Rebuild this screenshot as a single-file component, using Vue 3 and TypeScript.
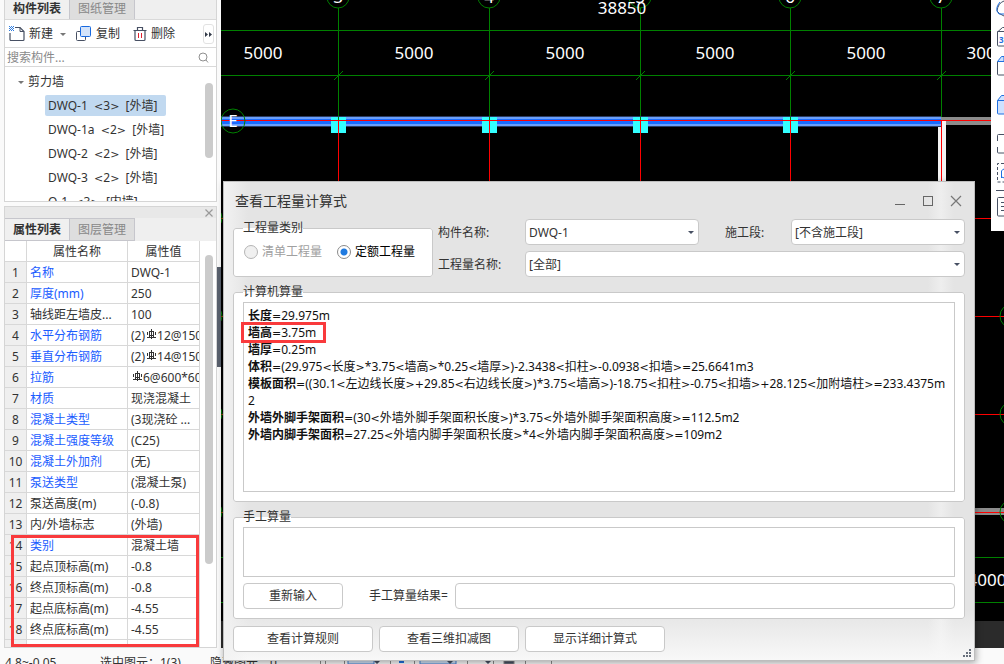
<script setup lang="ts">
import { ref } from 'vue'

interface TreeItem {
  label: string
  selected?: boolean
}

interface Property {
  name: string
  value: string
  link?: boolean
  prefix?: string
  rebar?: boolean
}

interface FormulaLine {
  label: string
  text: string
}

interface TextRun {
  text: string
  operator: boolean
}

const treeItems: TreeItem[] = [
  { label: 'DWQ-1  <3>  [外墙]', selected: true },
  { label: 'DWQ-1a  <2>  [外墙]' },
  { label: 'DWQ-2  <2>  [外墙]' },
  { label: 'DWQ-3  <2>  [外墙]' },
  { label: 'Q-1  <3>  [内墙]' },
]

const properties: Property[] = [
  { name: '名称', value: 'DWQ-1', link: true },
  { name: '厚度(mm)', value: '250', link: true },
  { name: '轴线距左墙皮...', value: '100' },
  { name: '水平分布钢筋', prefix: '(2)', rebar: true, value: '12@150', link: true },
  { name: '垂直分布钢筋', prefix: '(2)', rebar: true, value: '14@150', link: true },
  { name: '拉筋', prefix: '', rebar: true, value: '6@600*600', link: true },
  { name: '材质', value: '现浇混凝土', link: true },
  { name: '混凝土类型', value: '(3现浇砼 ...', link: true },
  { name: '混凝土强度等级', value: '(C25)', link: true },
  { name: '混凝土外加剂', value: '(无)', link: true },
  { name: '泵送类型', value: '(混凝土泵)', link: true },
  { name: '泵送高度(m)', value: '(-0.8)' },
  { name: '内/外墙标志', value: '(外墙)' },
  { name: '类别', value: '混凝土墙', link: true },
  { name: '起点顶标高(m)', value: '-0.8' },
  { name: '终点顶标高(m)', value: '-0.8' },
  { name: '起点底标高(m)', value: '-4.55' },
  { name: '终点底标高(m)', value: '-4.55' },
  { name: '', value: '' },
]

const formulas: FormulaLine[] = [
  { label: '长度', text: '=29.975m' },
  { label: '墙高', text: '=3.75m' },
  { label: '墙厚', text: '=0.25m' },
  { label: '体积', text: '=(29.975<长度>*3.75<墙高>*0.25<墙厚>)-2.3438<扣柱>-0.0938<扣墙>=25.6641m3' },
  {
    label: '模板面积',
    text: '=((30.1<左边线长度>+29.85<右边线长度>)*3.75<墙高>)-18.75<扣柱>-0.75<扣墙>+28.125<加附墙柱>=233.4375m2',
  },
  { label: '外墙外脚手架面积', text: '=(30<外墙外脚手架面积长度>)*3.75<外墙外脚手架面积高度>=112.5m2' },
  { label: '外墙内脚手架面积', text: '=27.25<外墙内脚手架面积长度>*4<外墙内脚手架面积高度>=109m2' },
]

// Splits a string so that math signs can be set in their own, wider face.
function runs(text: string): TextRun[] {
  return text
    .split(/([<>=+])/)
    .filter((part) => part.length > 0)
    .map((part) => ({ text: part, operator: /^[<>=+]$/.test(part) }))
}

const axes = [
  { x: 338, name: '3' },
  { x: 489, name: '4' },
  { x: 640, name: '5' },
  { x: 790, name: '6' },
  { x: 941, name: '7' },
]
const columnXs = [338, 489, 640, 790]
const spanXs = [263, 414, 565, 715, 866]
const sideAxisYs = [218, 316, 414, 512]

const component = ref('DWQ-1')
const segment = ref('[不含施工段]')
const quantity = ref('[全部]')
const category = ref('quota')
const search = ref('')
const manual = ref('')
const manualResult = ref('')
</script>

<template>
  <div class="app">
    <div class="workspace">
      <aside class="dock">
        <section class="components">
          <div class="tabs tabs-top">
            <button class="tab active">构件列表</button>
            <button class="tab">图纸管理</button>
          </div>
          <div class="toolbar">
            <button class="tool new">
              <svg width="16" height="16" viewBox="0 0 16 16">
                <path d="M6 1.5h5l4 4v8a1 1 0 0 1-1 1H2a1 1 0 0 1-1-1V7" fill="none" stroke="#475063" stroke-width="1.2" />
                <path d="M11 1.5v4h4" fill="none" stroke="#475063" />
                <path d="M0 .5h5M0 2.5h5M0 4.5h5" stroke="#2f7de0" stroke-dasharray="1 1" />
                <path d="M1 1.5h4M1 3.5h4" stroke="#2f7de0" stroke-dasharray="1 1" />
              </svg>
              新建
              <i class="caret"></i>
            </button>
            <button class="tool copy">
              <svg width="16" height="16" viewBox="0 0 16 16">
                <path d="M4 5.5H1.5a1 1 0 0 0-1 1v7a1 1 0 0 0 1 1h7a1 1 0 0 0 1-1V11" fill="none" stroke="#475063" />
                <rect x="4.5" y=".5" width="10" height="10" rx="1" fill="#d3e3fa" stroke="#1769e0" />
              </svg>
              复制
            </button>
            <button class="tool">
              <svg width="14" height="16" viewBox="0 0 14 16">
                <path d="M.5 4.5h13M4.5 4V1.5h5V4M2 4.5v9a1 1 0 0 0 1 1h8a1 1 0 0 0 1-1v-9" fill="none" stroke="#475063" stroke-width="1.2" />
                <path d="M5.5 7v5M8.5 7v5" stroke="#e02030" />
              </svg>
              删除
            </button>
            <button class="more" aria-label="更多">
              <svg width="7" height="5" viewBox="0 0 7 5"><path d="M0 0l3 2.5L0 5zM4 0l3 2.5L4 5z" fill="#333a48" /></svg>
            </button>
          </div>
          <label class="search">
            <input v-model="search" type="text" placeholder="搜索构件..." />
            <svg width="11" height="11" viewBox="0 0 11 11">
              <circle cx="5" cy="5" r="4" fill="none" stroke="#909090" />
              <path d="M8 8l2 2.5" stroke="#909090" />
            </svg>
          </label>
          <div class="tree">
            <ul>
              <li class="group"><i class="caret"></i>剪力墙</li>
              <li v-for="item in treeItems" :key="item.label">
                <span class="leaf" :class="{ selected: item.selected }"><span v-for="(run, i) in runs(item.label)" :key="i" :class="{ op: run.operator }">{{ run.text }}</span></span>
              </li>
            </ul>
            <div class="track"><div class="thumb tree-thumb"></div></div>
          </div>
        </section>

        <section class="properties">
          <div class="strip">
            <button aria-label="关闭">
              <svg width="8" height="8" viewBox="0 0 8 8"><path d="M.5.5l7 7M7.500.5l-7 7" stroke="#999" stroke-width="1.2" /></svg>
            </button>
          </div>
          <div class="tabs">
            <button class="tab active">属性列表</button>
            <button class="tab">图层管理</button>
          </div>
          <div class="grid">
            <table>
              <colgroup>
                <col class="c-num" />
                <col class="c-name" />
                <col class="c-value" />
              </colgroup>
              <thead>
                <tr><th></th><th>属性名称</th><th>属性值</th></tr>
              </thead>
              <tbody>
                <tr v-for="(p, i) in properties" :key="i">
                  <th scope="row">{{ p.name ? i + 1 : '' }}</th>
                  <td :class="{ link: p.link }">{{ p.name }}</td>
                  <td>{{ p.prefix }}<svg v-if="p.rebar" class="rebar" width="11" height="10" viewBox="0 0 11 10" fill="none" stroke="#333" shape-rendering="crispEdges"><path d="M5.500 0v10M3.500 2v6M7.500 2v6M1 8.500h9" /><path d="M3 2.500h5M3 6.500h5M1.500 3v3M9.500 3v3" /></svg>{{ p.value }}</td>
                </tr>
              </tbody>
            </table>
            <div class="track"><div class="thumb grid-thumb"></div></div>
            <div class="mark mark-grid"></div>
          </div>
        </section>
        <div class="splitter"></div>
      </aside>

      <main class="canvas">
        <svg width="100%" height="100%" shape-rendering="crispEdges">
          <g transform="translate(-221 0)">
            <rect x="221" y="621" width="100%" height="27" fill="#2b2b2b" />
            <g stroke="#008000">
              <path d="M221 30.5h783M221 75.5h783M221 557.500h783M221 602.500h783" />
              <path v-for="a in axes" :key="a.x" :d="`M${a.x + 0.5} 8V120`" />
            </g>
            <path d="M221 218.500h783M221 316.500h783M221 414.500h783" stroke="#ff0000" />
            <rect x="941" y="117" width="63" height="8" fill="#8c8c8c" />
            <rect x="938" y="121" width="8" height="70" fill="#f4f4f4" />
            <rect x="974" y="508" width="30" height="7" fill="#8c8c8c" />
            <path d="M221 512.500h783" stroke="#ff0000" />
            <rect x="221" y="116" width="720" height="11" fill="#2b3d63" />
            <rect x="221" y="117" width="720" height="9" fill="#6a9ffa" />
            <rect x="221" y="119" width="720" height="5" fill="#196bff" />
            <rect v-for="x in columnXs" :key="x" :x="x - 7" y="117" width="15" height="16" fill="#33ffff" />
            <path d="M221 120.500h783" stroke="#ff0000" />
            <path v-for="a in axes" :key="a.name" :d="`M${a.x + 0.5} 121V200`" stroke="#ff0000" />
            <path v-for="x in columnXs" :key="`t${x}`" :d="`M${x + 0.5} 117V120`" stroke="#008000" />
            <g fill="none" stroke="#008000" shape-rendering="auto">
              <path v-for="a in axes" :key="a.x" :d="`M${a.x - 4} 80l9 -9`" />
              <circle v-for="a in axes" :key="a.name" :cx="a.x" cy="-3" r="11" />
              <circle cx="233" cy="121" r="12" />
              <circle v-for="y in sideAxisYs" :key="y" cx="210" :cy="y" r="12" />
              <circle v-for="y in sideAxisYs.slice(1)" :key="`r${y}`" cx="1012" :cy="y" r="12" />
            </g>
            <g class="cad-text" text-anchor="middle" shape-rendering="auto">
              <text v-for="a in axes" :key="a.x" :x="a.x" y="3">{{ a.name }}</text>
              <text x="622" y="14">38850</text>
              <text v-for="x in spanXs" :key="x" :x="x" y="59">5000</text>
              <text x="986" y="59">3000</text>
              <text x="987" y="586">4000</text>
              <text x="233" y="127">E</text>
            </g>
          </g>
        </svg>
      </main>
    </div>

    <nav class="view-tools" aria-label="视图">
      <svg width="13" height="231" viewBox="0 0 13 231" fill="none" stroke="#475063">
        <path d="M13 1Q7 3 6 11q2 3 7 5" />
        <path d="M9 2Q3 9 8 14h5" stroke="#1f6fe0" />
        <path d="M13 31.500H6.500V45a1 1 0 0 0 1 1H13M6.500 32l5-4.500H13" />
        <path d="M6.500 61.500V74a1 1 0 0 0 1 1H13" />
        <path d="M6.500 61.500l4-5H13v5z" fill="#cfe2ff" stroke="#1f6fe0" />
        <path d="M6.500 100.500l4-5H15V114H7.500a1 1 0 0 1-1-1zM6.500 100.500H13" fill="#cfe2ff" stroke="#1f6fe0" />
        <path d="M13 134.500H7.500a1 1 0 0 0-1 1V141M6.500 147v5a1 1 0 0 0 1 1H13" />
        <path d="M13 163.500H6.500V182H13" stroke-dasharray="3 2" />
        <path d="M10.500 171v7M10.500 171q1-2 3-2M10.500 177l3 1" stroke="#1f6fe0" />
        <path d="M5 190.500h8" />
        <path d="M13 197.500H7.500a1 1 0 0 0-1 1V215a1 1 0 0 0 1 1H13M10 202.500h3M10 206.500h3M10 210.500h3" />
        <text x="8" y="43" class="three">3</text>
      </svg>
    </nav>

    <footer class="status">
      <span class="elevation">4.8~-0.05</span>
      <span class="picked">选中图元：1(3)</span>
      <span class="hidden-count">隐藏图元：0</span>
      <svg width="234" height="9" viewBox="0 0 234 9" fill="none" stroke="#8a8a8a">
        <path d="M28 0h26v9H28zM100 0h36v9h-36z" fill="#cfe0f5" stroke="#3f7fd0" />
        <path d="M.5 0v9M5.500 0v9M24.500 0v9M70.500 0v9M94.500 0v9M147.500 0v9M173.500 0v9M205.500 0v9M231.500 0v9" />
        <path d="M184 6h10v3h-10z" fill="#475063" />
        <path d="M54 6h6l-3 3zM127 6h6l-3 3zM165 6h6l-3 3z" fill="#475063" stroke="none" />
        <path d="M79 7h5" stroke="#1f6fe0" stroke-width="2" />
      </svg>
    </footer>

    <section class="dialog" role="dialog" aria-labelledby="dialog-title">
      <header class="titlebar">
        <h1 id="dialog-title">查看工程量计算式</h1>
        <button aria-label="最小化"><svg width="12" height="12" viewBox="0 0 12 12"><path d="M1 9.500h10" stroke="#666" /></svg></button>
        <button aria-label="最大化"><svg width="12" height="12" viewBox="0 0 12 12"><rect x="1.500" y="1.500" width="9" height="9" fill="none" stroke="#666" /></svg></button>
        <button aria-label="关闭"><svg width="12" height="12" viewBox="0 0 12 12"><path d="M1 1l10 10M11 1L1 11" stroke="#777" stroke-width="1.200" /></svg></button>
      </header>

      <form class="body" @submit.prevent>
        <div class="filters">
          <fieldset class="category">
            <legend>工程量类别</legend>
            <label class="radio disabled"><input v-model="category" type="radio" name="category" value="list" disabled />清单工程量</label>
            <label class="radio"><input v-model="category" type="radio" name="category" value="quota" />定额工程量</label>
          </fieldset>
          <div class="fields">
            <label for="component">构件名称:</label>
            <div class="combo">
              <select id="component" v-model="component"><option>DWQ-1</option></select>
            </div>
            <label for="segment" class="second">施工段:</label>
            <div class="combo">
              <select id="segment" v-model="segment"><option>[不含施工段]</option></select>
            </div>
            <label for="quantity">工程量名称:</label>
            <div class="combo wide">
              <select id="quantity" v-model="quantity"><option>[全部]</option></select>
            </div>
          </div>
        </div>

        <fieldset class="group-box computed">
          <legend>计算机算量</legend>
          <div class="result">
            <p v-for="line in formulas" :key="line.label"><b>{{ line.label }}</b><span v-for="(run, i) in runs(line.text)" :key="i" :class="{ op: run.operator }">{{ run.text }}</span></p>
            <div class="mark mark-result"></div>
          </div>
        </fieldset>

        <fieldset class="group-box manual">
          <legend>手工算量</legend>
          <textarea v-model="manual" aria-label="手工算量"></textarea>
          <div class="manual-row">
            <button type="button" class="btn reset">重新输入</button>
            <label for="manual-result">手工算量结果=</label>
            <input id="manual-result" v-model="manualResult" type="text" />
          </div>
        </fieldset>

        <div class="actions">
          <button type="button" class="btn">查看计算规则</button>
          <button type="button" class="btn">查看三维扣减图</button>
          <button type="button" class="btn">显示详细计算式</button>
        </div>
      </form>
      <svg class="grip" width="8" height="8" viewBox="0 0 8 8" fill="#68707c">
        <path d="M6 0h2v2H6zM3 3h2v2H3zM6 3h2v2H6zM0 6h2v2H0zM3 6h2v2H3zM6 6h2v2H6z" />
      </svg>
    </section>
  </div>
</template>

<style>
body {
  margin: 0;
  overflow: hidden;
}
</style>

<style scoped>
.app,
.app * {
  box-sizing: border-box;
}
.app {
  position: relative;
  display: flex;
  flex-direction: column;
  height: 100vh;
  overflow: hidden;
  background: #fafafa;
  color: #333;
  font: 12px/16px "Noto Sans", "Noto Sans CJK SC", sans-serif;
}
button,
input,
select,
textarea {
  margin: 0;
  padding: 0;
  border: 0;
  background: none;
  color: inherit;
  font: inherit;
}
svg {
  display: block;
  flex: none;
}
.op {
  font-family: "DejaVu Sans", sans-serif;
  font-size: 11px;
  line-height: 1;
}
.workspace {
  flex: 1;
  display: flex;
  min-height: 0;
}
.dock {
  position: relative;
  flex: none;
  display: flex;
  flex-direction: column;
  gap: 4px;
  width: 221px;
  padding: 0 4px;
  background: #fafafa;
}
.splitter {
  position: absolute;
  right: 0;
  top: 267px;
  width: 4px;
  height: 100px;
  background: #59606d;
}
.components,
.properties {
  border: 1px solid #d5d5d5;
}
.components {
  border-top: 0;
  background: #fff;
}
.properties {
  flex: 1;
  display: flex;
  flex-direction: column;
  min-height: 0;
  background: #fff;
}
.tabs {
  display: flex;
  height: 23px;
  background: #efefef;
}
.tab {
  width: 65px;
  border: 1px solid #c6c6cc;
  border-left: 0;
  background: #dedede;
  color: #888;
}
.tab.active {
  background: #f0f0f0;
  color: #333;
  font-weight: bold;
}
.tabs-top {
  height: 20px;
  border-bottom: 1px solid #d9d9d9;
}
.tabs-top .tab {
  border-top: 0;
  border-bottom: 0;
  padding-bottom: 1px;
}
.toolbar {
  display: flex;
  align-items: center;
  height: 28px;
  padding: 1px 2px 0 4px;
  border-bottom: 1px solid #d9d9d9;
}
.tool {
  display: flex;
  align-items: center;
  gap: 4px;
  white-space: nowrap;
}
.new {
  margin-right: 10px;
}
.copy {
  margin-right: 13px;
}
.caret {
  width: 0;
  border: 3px solid transparent;
  border-top-color: #777;
  border-bottom: 0;
}
.new .caret {
  margin-left: 3px;
}
.more {
  display: flex;
  align-items: center;
  justify-content: center;
  width: 11px;
  height: 20px;
  margin-left: auto;
  border: 1px solid #e2e2e2;
  border-radius: 3px;
}
.search {
  display: flex;
  align-items: center;
  height: 19px;
  padding: 0 7px 0 2px;
  border-bottom: 1px solid #d9d9d9;
}
.search input {
  flex: 1;
  min-width: 0;
  padding-top: 1px;
  outline: 0;
}
.search input::placeholder {
  color: #8a8a8a;
}
.tree {
  display: flex;
  height: 134px;
  padding-top: 2px;
  overflow: hidden;
}
.tree ul {
  flex: 1;
  margin: 0;
  padding: 0;
  list-style: none;
}
.tree li {
  display: flex;
  align-items: center;
  height: 24px;
  padding-left: 40px;
  white-space: pre;
}
.tree .group {
  gap: 4px;
  padding: 2px 0 0 13px;
}
.leaf {
  padding: 3px 9px 2px 3px;
  border-radius: 2px;
}
.selected {
  background: #c1d9f0;
}
.track {
  flex: none;
  width: 16px;
  padding-left: 5px;
}
.thumb {
  width: 8px;
  border-radius: 4px;
  background: #cbcbcb;
}
.tree-thumb {
  height: 75px;
  margin-top: 14px;
}
.strip {
  display: flex;
  align-items: center;
  justify-content: flex-end;
  height: 11px;
  padding-right: 3px;
  background: #e8e8e8;
}
.grid {
  position: relative;
  flex: 1;
  display: flex;
  min-height: 0;
  overflow: hidden;
}
.grid table {
  flex: none;
  width: 195px;
  table-layout: fixed;
  border-collapse: separate;
  border-spacing: 0;
}
.c-num {
  width: 22px;
}
.c-name {
  width: 101px;
}
.grid th,
.grid td {
  height: 21px;
  padding: 2px 0 0 3px;
  border-right: 1px solid #d8d8d8;
  border-bottom: 1px solid #d8d8d8;
  overflow: hidden;
  font-weight: normal;
  white-space: nowrap;
}
.grid th {
  padding-left: 0;
  text-align: center;
}
.grid tbody th {
  background: #efefef;
}
.grid .link {
  color: #1a5cff;
}
.rebar {
  display: inline-block;
  vertical-align: 1px;
  margin-left: 1px;
}
.grid-thumb {
  height: 309px;
  margin-top: 14px;
}
.mark {
  position: absolute;
  border: 3px solid #f93a3c;
}
.mark-grid {
  left: 6px;
  top: 294px;
  width: 188px;
  bottom: 0;
}
.canvas {
  flex: 1;
  min-width: 0;
  background: #000;
  overflow: hidden;
}
.cad-text {
  fill: #fff;
  font: 17px "Noto Sans", sans-serif;
}
.view-tools {
  position: absolute;
  right: 0;
  top: 0;
  background: #fff;
}
.three {
  fill: #1f6fe0;
  stroke: none;
  font: bold 8px "Noto Sans", sans-serif;
}
.status {
  display: flex;
  height: 16px;
  padding: 7px 5px 0;
  overflow: hidden;
  white-space: nowrap;
}
.elevation {
  width: 95px;
}
.picked,
.hidden-count {
  width: 110px;
}
.dialog {
  position: absolute;
  inset: 181px 29px 3px 223px;
  display: flex;
  flex-direction: column;
  border: 1px solid #bdbdbd;
  background:
    linear-gradient(to right, #f2f2f2, transparent 24px),
    linear-gradient(to top, #f8f8f8, transparent 50px),
    linear-gradient(to left, transparent 20px, #eeeeee 33px, transparent 46px),
    #e4e4e4;
  box-shadow: 1px 2px 7px rgba(0, 0, 0, 0.35);
}
.titlebar {
  display: flex;
  align-items: center;
  gap: 16px;
  height: 37px;
  padding: 0 12px 0 11px;
}
.titlebar h1 {
  flex: 1;
  margin: 0;
  font-size: 14px;
  line-height: 20px;
  font-weight: normal;
}
.body {
  flex: 1;
  display: flex;
  flex-direction: column;
  gap: 7px;
  min-height: 0;
  padding: 0 9px 8px;
}
.filters {
  display: flex;
  gap: 5px;
  align-items: flex-end;
}
fieldset {
  min-width: 0;
  margin: 0;
  border: 1px solid #c9c9c9;
  border-radius: 3px;
  background: #fff;
}
legend {
  height: 16px;
  padding: 0;
}
.category {
  flex: none;
  display: flex;
  align-items: center;
  gap: 15px;
  width: 200px;
  height: 57px;
  padding: 0 0 8px 10px;
}
.category legend {
  margin-left: -1px;
}
.radio {
  display: flex;
  align-items: center;
  gap: 4px;
  color: #000;
}
.radio.disabled {
  color: #a0a0a0;
}
.radio input {
  appearance: none;
  width: 14px;
  height: 14px;
  border: 1px solid #8a8a8a;
  border-radius: 50%;
  background: #fff;
}
.radio input:checked {
  background: radial-gradient(circle, #1f7ae0 3px, #fff 4px);
}
.radio input:disabled {
  border-color: #b5b5b5;
  background: #f0f0f0;
}
.fields {
  flex: 1;
  display: grid;
  grid-template-columns: 87px 1fr 92px 1fr;
  row-gap: 6px;
  align-items: center;
}
.fields label {
  padding-top: 1px;
}
.fields .second {
  padding-left: 26px;
}
.wide {
  grid-column: 2 / 5;
}
.combo {
  position: relative;
}
.combo::after {
  content: "";
  position: absolute;
  right: 5px;
  top: 12px;
  border: 3px solid transparent;
  border-top-color: #475063;
  border-bottom: 0;
}
.combo select {
  appearance: none;
  display: block;
  width: 100%;
  height: 26px;
  padding: 1px 16px 0 3px;
  border: 1px solid #c9c9c9;
  border-radius: 4px;
  background: #fff;
}
.group-box {
  display: flex;
  flex-direction: column;
  padding: 2px 9px 9px;
}
.computed {
  flex: 1;
}
.result {
  position: relative;
  flex: 1;
  padding: 4px 8px 4px 4px;
  border: 1px solid #c9c9c9;
  color: #111;
  line-height: 17px;
  word-break: break-all;
}
.result p {
  margin: 0;
}
.mark-result {
  left: -3px;
  top: 19px;
  width: 85px;
  height: 21px;
}
.manual textarea {
  display: block;
  height: 50px;
  border: 1px solid #c9c9c9;
  resize: none;
}
.manual-row {
  display: flex;
  align-items: center;
  margin-top: 6px;
}
.manual-row label {
  margin: 0 7px 0 26px;
}
.manual-row input {
  flex: 1;
  height: 26px;
  border: 1px solid #c9c9c9;
  border-radius: 4px;
}
.btn {
  width: 140px;
  height: 26px;
  border: 1px solid #c9c9c9;
  border-radius: 4px;
  background: #fff;
}
.reset {
  width: 100px;
}
.actions {
  display: flex;
  gap: 6px;
}
.grip {
  position: absolute;
  right: 3px;
  bottom: 3px;
}
</style>
